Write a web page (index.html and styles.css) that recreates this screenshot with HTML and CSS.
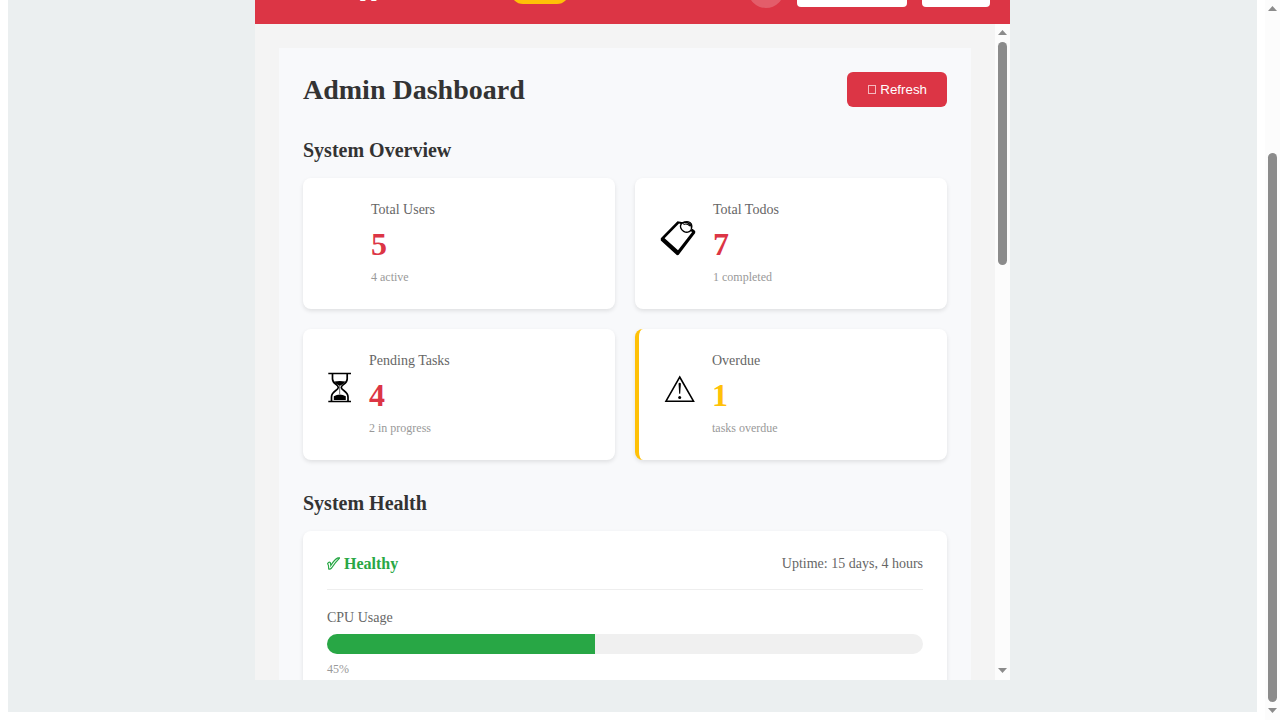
FILE: index.html
```html
<!DOCTYPE html>
<html lang="en">
<head>
<meta charset="utf-8">
<title>Admin Dashboard</title>
<link rel="stylesheet" href="styles.css">
</head>
<body>
<div class="page">
  <div class="app">
    <header class="topbar">
      <div class="topbar-inner">
        <div class="brand">Todo App</div>
        <span class="role"></span>
        <div class="user">
          <span class="avatar"></span>
          <div class="actions">
            <button class="nav-button nav-wide" type="button" aria-label="User view"></button>
            <button class="nav-button" type="button" aria-label="Log out"></button>
          </div>
        </div>
      </div>
    </header>
    <div class="body">
      <main class="content">
        <div class="panel">
          <div class="panel-head">
            <h1>Admin Dashboard</h1>
            <button class="refresh" type="button"><svg class="refresh-icon" viewBox="0 0 10 11" aria-hidden="true"><rect x="1.500" y="1.500" width="7" height="8" fill="none" stroke="#fff" stroke-opacity="0.65"/></svg>Refresh</button>
          </div>
          <section class="section">
            <h2>System Overview</h2>
            <div class="cards">
              <article class="card">
                <span class="icon icon-users"></span>
                <div class="stat"><div class="label">Total Users</div><div class="value">5</div><div class="note">4 active</div></div>
              </article>
              <article class="card">
                <svg class="icon icon-todos" viewBox="0 0 38 45" aria-hidden="true">
                  <path fill-rule="evenodd" d="M18.500 0.300 L1.800 17.300 V19.400 L18 34.200 L19.500 33.900 L36.200 12 L36.200 10 L33.500 7.800 L31.500 9.500 L33 11.300 L19 29.300 L5.600 17.300 L20 2.600 L23 3.300 L24 1.300z"/>
                  <ellipse cx="27" cy="6.200" rx="5.800" ry="4.700" transform="rotate(30 27 6.200)" fill="#fff" stroke="#000" stroke-width="1.400"/>
                  <path d="M23.500 2.500 Q27 -0.500 31 1.500 Q33.500 3.500 32.700 6.500 M24.500 3.500 Q28 2 31 5" fill="none" stroke="#000" stroke-width="1.200"/>
                </svg>
                <div class="stat"><div class="label">Total Todos</div><div class="value">7</div><div class="note">1 completed</div></div>
              </article>
              <article class="card">
                <svg class="icon icon-pending" viewBox="0 0 26 45" aria-hidden="true">
                  <path d="M1.300 1.500H24 M1.300 29.500H24 M5.500 2V7C5.500 12 11.300 12.500 11.300 15.500C11.300 18.500 4.500 19 4.500 25V29 M20.200 2V7C20.200 12 14.300 12.500 14.300 15.500C14.300 18.500 21 19 21 25V29" fill="none" stroke="#000" stroke-width="1.700"/>
                  <path d="M7.300 9.500Q12.800 8.500 18.300 9.500Q17 11.800 13.500 13.500H12Q8.500 11.800 7.300 9.500z M6.800 28V24.300Q12.800 20.500 18.800 24.300V28z M12.500 13.500H13.100V22H12.500z"/>
                </svg>
                <div class="stat"><div class="label">Pending Tasks</div><div class="value">4</div><div class="note">2 in progress</div></div>
              </article>
              <article class="card card-warning">
                <svg class="icon icon-overdue" viewBox="0 0 33 45" aria-hidden="true">
                  <path d="M16.700 5L30.500 29.200H3z" fill="none" stroke="#000" stroke-width="1.600"/>
                  <path d="M15.500 11.500Q16.700 10 17.900 11.500L17.200 21.800H16.200z"/>
                  <circle cx="16.700" cy="25.600" r="1.500"/>
                </svg>
                <div class="stat"><div class="label">Overdue</div><div class="value">1</div><div class="note">tasks overdue</div></div>
              </article>
            </div>
          </section>
          <section class="section">
            <h2>System Health</h2>
            <div class="health">
              <div class="health-head">
                <strong class="healthy"><svg class="check" viewBox="0 0 13 14" aria-hidden="true"><path d="M0.600 6.700Q2 4.500 3.200 5.500Q3.700 6.500 3.800 8.500Q7.500 2.500 11 0.900L12.700 0.900Q8 5.500 4.600 11Q3 12.700 1.700 12Q1.800 8 0.600 6.700z" fill="none" stroke="#28a745" stroke-width="1.200"/></svg>Healthy</strong>
                <span class="uptime">Uptime: 15 days, 4 hours</span>
              </div>
              <div class="label">CPU Usage</div>
              <div class="meter"><div class="meter-fill" style="width: 45%"></div></div>
              <div class="note">45%</div>
            </div>
          </section>
        </div>
      </main>
      <div class="scrollbar" aria-hidden="true">
        <svg class="arrow" viewBox="0 0 9 5"><path d="M0 5 L4.500 0 L9 5z"/></svg>
        <div class="track"><div class="thumb thumb-inner"></div></div>
        <svg class="arrow" viewBox="0 0 9 5"><path d="M0 0 L4.500 5 L9 0z"/></svg>
      </div>
    </div>
  </div>
</div>
<div class="scrollbar" aria-hidden="true">
  <svg class="arrow" viewBox="0 0 9 5"><path d="M0 5 L4.500 0 L9 5z"/></svg>
  <div class="track track-end"><div class="thumb thumb-page"></div></div>
  <svg class="arrow" viewBox="0 0 9 5"><path d="M0 0 L4.500 5 L9 0z"/></svg>
</div>
</body>
</html>
```
FILE: styles.css
```css
* { box-sizing: border-box; }
body {
  display: flex;
  height: 100vh;
  margin: 0;
  overflow: hidden;
  background: #fff;
  font-family: "Liberation Serif", "Times New Roman", serif;
}
h1, h2 { margin: 0; color: #333; }
h1 { font-size: 28px; line-height: 32px; }
h2 { margin-bottom: 16px; font-size: 20px; line-height: 23px; }
button { border: 0; font-family: "Liberation Sans", Arial, sans-serif; }

.page {
  display: flex;
  flex: 1;
  justify-content: center;
  min-width: 0;
  margin: 0 8px 8px;
  padding-bottom: 32px;
  background: #ebeff0;
}
.app {
  display: flex;
  flex-direction: column;
  width: 100%;
  max-width: 755px;
  background: #f4f4f4;
}
.topbar {
  display: flex;
  flex: none;
  align-items: flex-end;
  height: 24px;
  overflow: hidden;
  background: #dc3545;
  color: #fff;
}
.topbar-inner {
  display: flex;
  flex: 1;
  align-items: center;
  padding: 16px 20px;
}
.brand { width: 236px; padding: 0 0 2px 24px; font-size: 20px; line-height: 23px; font-weight: bold; }
.role { width: 58px; height: 28px; border-radius: 12px; background: #ffc107; }
.user { display: flex; align-items: center; gap: 13px; margin-left: auto; }
.avatar { width: 36px; height: 36px; border-radius: 50%; background: rgba(255, 255, 255, 0.2); }
.actions { display: flex; gap: 15px; }
.nav-button { width: 68px; height: 34px; padding: 0; border-radius: 4px; background: #fff; }
.nav-wide { width: 110px; }

.body { display: flex; flex: 1; min-height: 0; }
.content { flex: 1; min-width: 0; padding: 24px; overflow: hidden; }
.panel { padding: 24px; background: #f8f9fb; }
.panel-head { display: flex; align-items: center; justify-content: space-between; margin-bottom: 32px; }
.refresh {
  display: flex;
  align-items: center;
  gap: 3px;
  height: 35px;
  padding: 0 20px;
  border-radius: 6px;
  background: #dc3545;
  color: #fff;
}
.refresh-icon { width: 10px; height: 11px; }
.section { margin-bottom: 32px; }
.cards { display: grid; grid-template-columns: 1fr 1fr; gap: 20px; }
.card, .health {
  padding: 24px;
  border-radius: 8px;
  background: #fff;
  box-shadow: 0 2px 4px rgba(0, 0, 0, 0.1);
}
.card { display: flex; align-items: center; gap: 16px; }
.card-warning { border-left: 4px solid #ffc107; }
.icon { flex: none; height: 45px; fill: #000; }
.icon-users { width: 28px; }
.icon-todos { width: 38px; }
.icon-pending { width: 26px; }
.icon-overdue { width: 33px; }
.stat { min-height: 83px; }
.label { margin-bottom: 8px; color: #666; font-size: 14px; line-height: 16px; }
.value { margin-bottom: 7px; color: #dc3545; font-size: 32px; line-height: 37px; font-weight: bold; }
.card-warning .value { color: #ffc107; }
.note { color: #999; font-size: 12px; line-height: 14px; }

.health-head {
  display: flex;
  align-items: center;
  justify-content: space-between;
  margin-bottom: 20px;
  padding-bottom: 16px;
  border-bottom: 1px solid #eee;
}
.healthy { display: flex; align-items: center; gap: 4px; color: #28a745; font-size: 16px; line-height: 18px; }
.check { width: 13px; height: 14px; }
.uptime { color: #666; font-size: 14px; line-height: 16px; }
.meter { height: 20px; margin-bottom: 8px; overflow: hidden; border-radius: 10px; background: #f0f0f0; }
.meter-fill { height: 100%; background: #28a745; }

.scrollbar {
  display: flex;
  flex: none;
  flex-direction: column;
  align-items: center;
  width: 15px;
  padding: 6px 0 7px;
  background: #fcfcfc;
}
.arrow { display: block; flex: none; width: 9px; height: 5px; fill: #8b8b8b; }
.track { display: flex; flex: 1; flex-direction: column; padding: 7px 0 6px; }
.track-end { justify-content: flex-end; }
.thumb { width: 9px; border-radius: 5px; background: #8b8b8b; }
.thumb-inner { height: 36%; }
.thumb-page { height: calc(80% + 2px); }
```
